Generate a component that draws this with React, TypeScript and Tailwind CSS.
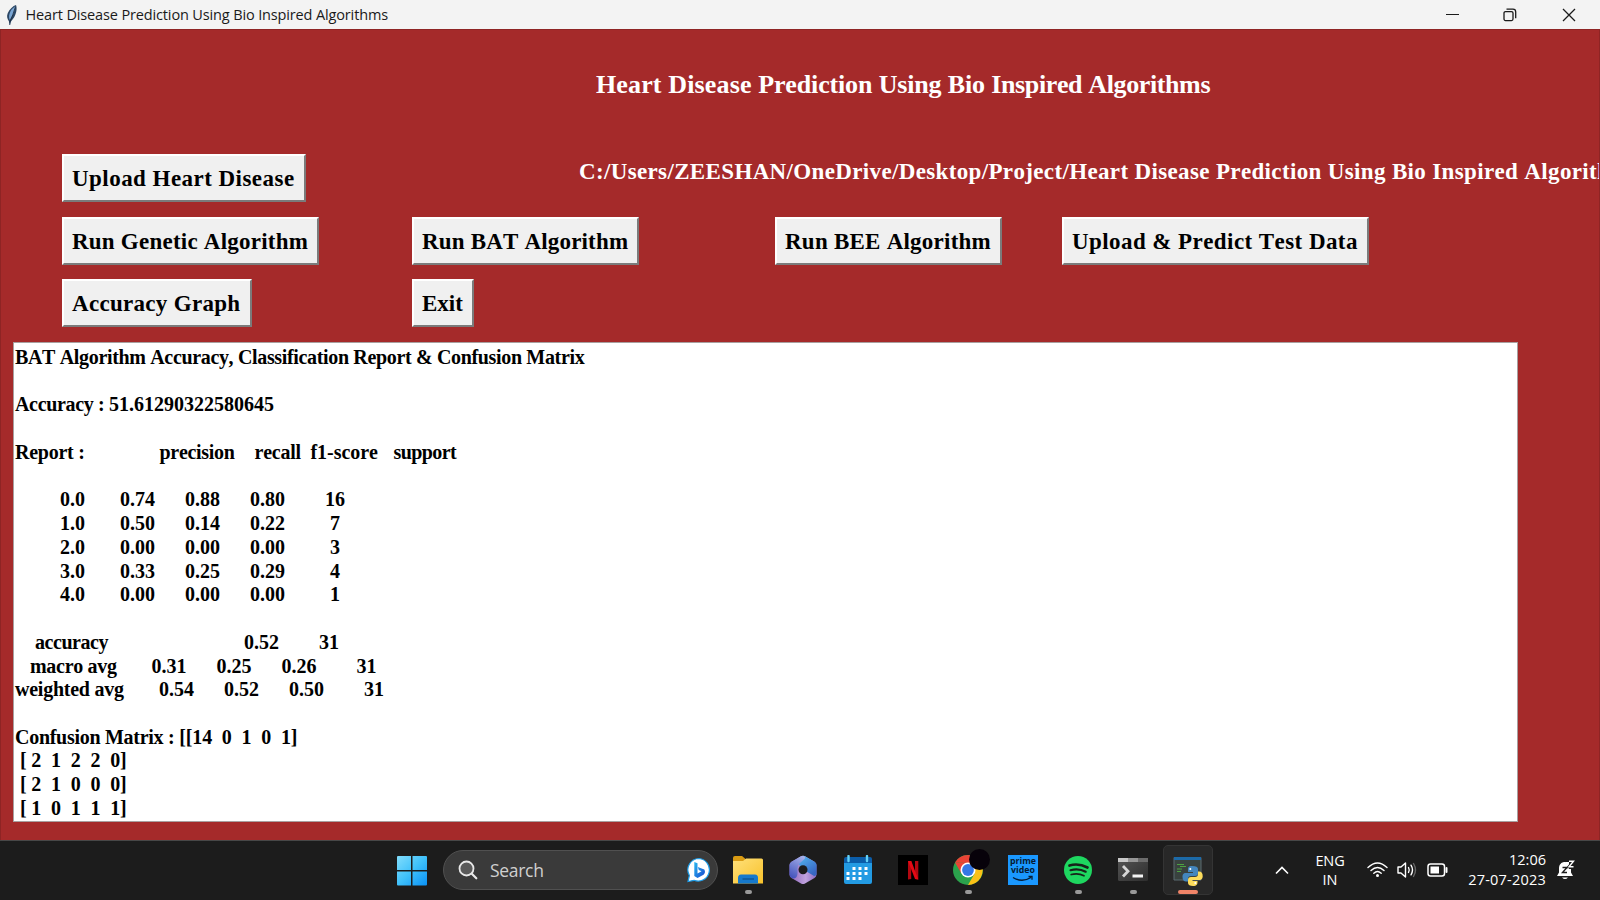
import React from "react";

const serif = "font-['Liberation_Serif','Times_New_Roman',serif] font-bold [font-kerning:none] [font-variant-ligatures:none]";

function TkButton({ label, className }: { label: string; className: string }) {
  return (
    <button
      className={`${className} h-12 shrink-0 whitespace-nowrap border-2 border-b-[#7b7b7b] border-l-white border-r-[#7b7b7b] border-t-white bg-[#f0f0f0] pl-2 text-left text-[23px] leading-none text-black`}
    >
      {label}
    </button>
  );
}

function TitleBar() {
  return (
    <header className="flex h-[29px] shrink-0 items-center bg-[#f3f3f3] pl-[5px]">
      <svg width="14" height="22" viewBox="0 0 14 22">
        <path d="M11 1C12.3 4 11.5 9.500 9 13.500L6 17.500 5.200 21 4.300 21 4 17.500C2 14.500 1.500 12 2.800 9 4.500 5 8 2 11 1Z" fill="#2b4664" />
        <path d="M10.500 2C10 7 7.500 12 4.800 16 3.300 13 4.200 8.500 7 5Z" fill="#79a5d3" />
        <path d="M10.500 2.500C9 8 7 13 4.700 18.500" stroke="#1a2a3c" strokeWidth=".8" fill="none" />
      </svg>
      <span className="ml-[6.5px] whitespace-nowrap font-['Open_Sans','Noto_Sans',sans-serif] text-[14.5px] leading-5 tracking-[-0.14px] text-[#1a1a1a]">
        Heart Disease Prediction Using Bio Inspired Algorithms
      </span>
      <div className="ml-auto flex items-center pr-6 text-[#1a1a1a]">
        <svg width="13" height="14" viewBox="0 0 13 14"><path d="M0 6.500H13" stroke="currentColor" /></svg>
        <svg className="ml-[44px]" width="14" height="14" viewBox="0 0 14 14" fill="none" stroke="currentColor" strokeWidth="1.3">
          <rect x="1" y="3.6" width="9" height="9" rx="1.5" />
          <path d="M3.5 1.2H10Q12.7 1.2 12.7 4V10.3" />
        </svg>
        <svg className="ml-[45px]" width="14" height="14" viewBox="0 0 14 14"><path d="M1 1 13 13M13 1 1 13" stroke="currentColor" strokeWidth="1.3" /></svg>
      </div>
    </header>
  );
}

const scoreRows = [
  "         0.0       0.74      0.88      0.80        16",
  "         1.0       0.50      0.14      0.22         7",
  "         2.0       0.00      0.00      0.00         3",
  "         3.0       0.33      0.25      0.29         4",
  "         4.0       0.00      0.00      0.00         1",
];

const matrixRows = [" [ 2  1  2  2  0]", " [ 2  1  0  0  0]", " [ 1  0  1  1  1]"];

function Line({ children }: { children?: React.ReactNode }) {
  return <div className="flex h-[23.74px] whitespace-pre">{children}</div>;
}

function Report() {
  return (
    <section className="ml-3 mt-[15px] h-[480px] w-[1505px] overflow-hidden border border-[#a8a0a0] bg-white pl-px pt-[2px] text-[20px] leading-[24px] text-black">
      <Line><span className="tracking-[-0.34px]">BAT Algorithm Accuracy, Classification Report &amp; Confusion Matrix</span></Line>
      <Line />
      <Line><span className="tracking-[-0.33px]">Accuracy : </span>51.61290322580645</Line>
      <Line />
      <Line>
        <span className="w-[144.5px] tracking-[-0.25px]">Report :</span>
        <span className="w-[95px] tracking-[-0.3px]">precision</span>
        <span className="w-[56px] tracking-[-0.25px]">recall</span>
        <span className="w-[83px] tracking-[-0.05px]">f1-score</span>
        <span className="tracking-[-0.6px]">support</span>
      </Line>
      <Line />
      {scoreRows.map((row) => <Line key={row}>{row}</Line>)}
      <Line />
      <Line><span className="w-[229px] pl-[20px] tracking-[-0.45px]">accuracy</span>{"0.52        31"}</Line>
      <Line><span className="w-[136.5px] pl-[15px] tracking-[-0.3px]">macro avg</span>{"0.31      0.25      0.26        31"}</Line>
      <Line><span className="w-[144px] tracking-[-0.25px]">weighted avg</span>{"0.54      0.52      0.50        31"}</Line>
      <Line />
      <Line><span className="tracking-[-0.28px]">Confusion Matrix : </span><span className="tracking-[-0.1px]">[[14  0  1  0  1]</span></Line>
      {matrixRows.map((row) => <Line key={row}><span className="tracking-[-0.1px]">{row}</span></Line>)}
    </section>
  );
}

function AppSlot({ children, dot }: { children: React.ReactNode; dot?: boolean }) {
  return (
    <div className="flex h-[50px] w-[55px] shrink-0 flex-col items-center pt-[10px]">
      <div className="flex h-[30px] items-center">{children}</div>
      {dot && <div className="mt-[5px] h-1 w-[7px] rounded-full bg-[#9a9a9a]" />}
    </div>
  );
}

function Taskbar() {
  return (
    <footer className="flex h-[60px] shrink-0 items-start border-t border-[#474747] bg-[#1c1c1c] pt-[4px] font-['Open_Sans','Noto_Sans',sans-serif] text-white">
      <svg className="ml-[397px] mt-[11px] shrink-0" width="30" height="30" viewBox="0 0 30 30">
        <defs>
          <linearGradient id="win" x1="0" y1="0" x2="1" y2="1"><stop stopColor="#82ddfb" /><stop offset=".5" stopColor="#3fc1fb" /><stop offset="1" stopColor="#0a91f5" /></linearGradient>
        </defs>
        <path d="M1 0H14V14H0V1Q0 0 1 0ZM15.5 0H29Q30 0 30 1V14H15.5ZM0 15.5H14V29.5H1Q0 29.5 0 28.5ZM15.5 15.5H30V28.5Q30 29.5 29 29.5H15.5Z" fill="url(#win)" />
      </svg>
      <div className="ml-4 mt-[5px] flex h-10 w-[275px] shrink-0 items-center rounded-full border border-[#505050] bg-[#3a3a3a] pl-[14px] pr-[5px]">
        <svg width="20" height="20" viewBox="0 0 20 20" fill="none" stroke="#e8e8e8" strokeLinecap="round">
          <circle cx="8.5" cy="8.5" r="7" strokeWidth="1.8" fill="#5a5a5a" /><path d="M13.8 13.8 18.3 18.3" strokeWidth="2.2" />
        </svg>
        <span className="ml-[12px] text-[17.5px] leading-6 tracking-[-0.3px] text-[#d0d0d0]">Search</span>
        <svg className="ml-auto" width="26" height="26" viewBox="0 0 26 26">
          <defs><linearGradient id="bing" x1="0" y1="0" x2="1" y2="1"><stop stopColor="#28b8ee" /><stop offset="1" stopColor="#1748d0" /></linearGradient></defs>
          <path d="M13 1.5A11.3 11.3 0 1 1 8 23.3L2 24.5 3.4 18.5A11.3 11.3 0 0 1 13 1.5Z" fill="#fff" stroke="#1b9ce8" strokeWidth="1.2" />
          <path d="M8.3 5 11.5 6.2V16.5L15.5 14.2 12.8 13 11.8 10 18.3 12.5Q20 15.5 17.5 17.8L11.5 21 8.3 19Z" fill="url(#bing)" />
        </svg>
      </div>

      <div className="ml-[2.5px] flex shrink-0">
        <AppSlot dot>
          <svg width="32" height="30" viewBox="0 0 32 30">
            <defs><linearGradient id="fold" x1="0" y1="0" x2="1" y2="1"><stop stopColor="#ffe07a" /><stop offset="1" stopColor="#f8c22b" /></linearGradient></defs>
            <path d="M1 3Q1 1 3 1H10L13 3.500V8H1Z" fill="#d99b13" />
            <path d="M1 6H11L14 3.5H29.5Q31 3.5 31 5V28.500H1Z" fill="url(#fold)" />
            <path d="M6 28.500V23Q6 19.500 9 19.500H23Q26 19.500 26 23V28.500Z" fill="#1679cc" /><path d="M10.500 24H22" stroke="#0c4e8a" strokeWidth="1.2" />
          </svg>
        </AppSlot>
        <AppSlot>
          <svg width="30" height="30" viewBox="0 0 30 30">
            <defs>
              <linearGradient id="o1" x1=".3" y1="1" x2=".7" y2="0"><stop stopColor="#4655bd" /><stop offset="1" stopColor="#a3aee8" /></linearGradient>
              <linearGradient id="o2" x1="0" y1="0" x2=".6" y2="1"><stop stopColor="#55b9f0" /><stop offset="1" stopColor="#3766c4" /></linearGradient>
              <linearGradient id="o3" x1="0" y1="0" x2="1" y2="0"><stop stopColor="#8c63bb" /><stop offset=".6" stopColor="#c0a2dd" /><stop offset="1" stopColor="#8b6cc4" /></linearGradient>
            </defs>
            <path d="M13 1.300Q15 .3 17 1.300L26.500 6.800Q28.500 8 28.500 10V19.500Q28.500 21.700 26.500 23L17 28.500Q15 29.500 13 28.500L3.500 23Q1.500 21.700 1.500 19.500V10Q1.500 8 3.500 6.800Z" fill="url(#o3)" />
            <path d="M15 .8 17 1.300 26.500 6.800Q28.500 8 28.500 10V19.500Q27 22 24.500 20L15 14.500 10.500 9Z" fill="url(#o2)" />
            <path d="M15 .8Q19 2 16 4.500L12 8Q9.500 10 9.500 13V19Q9 23.500 5 23.500L3.500 23Q1.500 21.700 1.500 19.500V10Q1.500 8 3.500 6.800L13 1.300Z" fill="url(#o1)" />
            <circle cx="15" cy="14.700" r="4.500" fill="#1c1c1c" />
          </svg>
        </AppSlot>
        <AppSlot>
          <svg width="28" height="30" viewBox="0 0 28 30">
            <path d="M0 4Q0 2 2 2H26Q28 2 28 4V9H0Z" fill="#0b5da9" /><path d="M0 8H28V27Q28 29 26 29H2Q0 29 0 27Z" fill="#239be3" />
            <path d="M4.5 1V6M23 1V6" stroke="#63d2f7" strokeWidth="2.4" strokeLinecap="round" />
            <path d="M8.500 13.500H24M2.500 18.500H24M2.500 23.500H18.500" stroke="#fff" strokeWidth="3" strokeDasharray="3 3" />
          </svg>
        </AppSlot>
        <AppSlot>
          <svg width="30" height="30" viewBox="0 0 30 30">
            <path d="M0 0H30V30H0Z" fill="#000" /><path d="M10 6V24.5L13.2 24V6ZM17 6V24L20.3 24.5V6Z" fill="#b30710" /><path d="M10 6H13.3L20.3 24.5 17 24Z" fill="#e50914" />
          </svg>
        </AppSlot>
        <AppSlot dot>
          <svg className="overflow-visible" width="30" height="30" viewBox="0 0 30 30">
            <circle cx="15" cy="15" r="15" fill="#2ba24c" />
            <path d="M2 7.5A15 15 0 0 1 28 7.5L15 8Z" fill="#ea4335" /><path d="M2 7.5 8.5 18.8 15 8Z" fill="#ea4335" />
            <path d="M15 8H28A15 15 0 0 1 15 30L21.5 18.8Z" fill="#fbc116" />
            <circle cx="15" cy="15" r="7.5" fill="#fff" /><circle cx="15" cy="15" r="5.9" fill="#3578e5" /><circle cx="26.5" cy="4.5" r="10.5" fill="#07020a" />
          </svg>
        </AppSlot>
        <AppSlot>
          <div className="flex h-[30px] w-[30px] flex-col items-center bg-[#1a98ff] pt-[2px] text-[8.8px] font-bold text-[#061b33]">
            <span className="leading-[9px]">prime</span>
            <span className="leading-[9px]">video</span>
            <svg width="22" height="7" viewBox="0 0 22 7" fill="none" stroke="currentColor" strokeWidth="1.3"><path d="M1 2.5Q10 8 19 2.5M16.5 1.5H20V4.8" /></svg>
          </div>
        </AppSlot>
        <AppSlot dot>
          <svg width="28" height="28" viewBox="0 0 28 28" fill="none" stroke="#17231a" strokeLinecap="round">
            <circle cx="14" cy="14" r="14" fill="#1ed760" stroke="none" />
            <path d="M5.5 9.5Q14.5 6.8 23.5 11.5" strokeWidth="2.7" /><path d="M6.5 14.2Q14.5 11.8 21.7 15.7" strokeWidth="2.2" /><path d="M7.2 18.5Q14.2 16.7 20 19.7" strokeWidth="1.8" />
          </svg>
        </AppSlot>
        <AppSlot dot>
          <svg width="30" height="24" viewBox="0 0 30 24">
            <defs><linearGradient id="term" x1="0" y1="0" x2="1" y2="1"><stop stopColor="#555" /><stop offset="1" stopColor="#2e2e2e" /></linearGradient></defs>
            <rect width="30" height="23" rx="1.5" fill="url(#term)" /><path d="M0 0H10V4H0Z" fill="#c8c8c8" /><path d="M10 0H20V4H10Z" fill="#969696" /><path d="M20 0H30V4H20Z" fill="#6b6b6b" />
            <path d="M5 8 10 13.2 5 18.5" fill="none" stroke="#d6d6d6" strokeWidth="2.8" /><path d="M14.5 18H25" stroke="#f4f4f4" strokeWidth="3" />
          </svg>
        </AppSlot>
        <div className="ml-[2.5px] flex h-[50px] w-[50px] shrink-0 flex-col items-center rounded-[5px] border border-[#343434] bg-[#282828] pt-[10px]">
          <svg width="30" height="30" viewBox="0 0 30 30">
            <path d="M1 1.500H28V24H1Z" fill="#39423f" stroke="#5b6a70" /><path d="M1 1H28V4H1Z" fill="#1c6aa8" />
            <path d="M4 8.500H11M4 13H9M7 10.500H13M4 15.500H8" stroke="#4da341" strokeWidth="1.2" />
            <path d="M19 10C15 10 15 12 15 14V16H20V17H13C10 17 9.5 19 9.5 21 9.5 24 11 25.5 13 25.5H15V23C15 21 16 20 18 20H22C24 20 25 19 25 17V13C25 11 23 10 19 10Z" fill="#4386bd" />
            <path d="M20 30C24 30 24.500 28 24.500 26V25H19.500V24H26C29 24 29.700 22 29.700 20 29.700 17 28.500 15.500 26 15.500H25V18C25 20 24 21 22 21H18C16 21 15 22 15 24V27C15 29 17 30 20 30Z" fill="#fcdc5c" />
            <circle cx="17.300" cy="13" r="1" fill="#fff" /><circle cx="22.300" cy="27" r="1" fill="#fff" />
          </svg>
          <div className="mt-[4px] h-1 w-5 rounded-full bg-[#f08468]" />
        </div>
      </div>

      <svg className="ml-[62px] mt-[21px] shrink-0" width="14" height="9" viewBox="0 0 14 9" fill="none" stroke="#fff" strokeWidth="1.600"><path d="M1 7.500 7 1.500 13 7.500" /></svg>
      <div className="ml-[19px] mt-[6px] flex w-[44px] shrink-0 flex-col items-center text-[14.500px] leading-[19px] tracking-[-0.1px]">
        <span>ENG</span><span>IN</span>
      </div>
      <div className="ml-[15px] mt-[16px] flex h-[18px] shrink-0 items-center">
        <svg width="21" height="16" viewBox="0 0 21 16" fill="none" stroke="#fff" strokeWidth="1.400" strokeLinecap="round">
          <path d="M1 5.500Q10.500 -3.500 20 5.500M4 8.500Q10.500 2.500 17 8.500M6.800 11.300Q10.500 7.800 14.200 11.300" /><circle cx="10.500" cy="13.500" r="1.500" fill="#fff" stroke="none" />
        </svg>
        <svg className="ml-[9px]" width="20" height="18" viewBox="0 0 20 18" fill="none" stroke="#fff" strokeWidth="1.400" strokeLinecap="round" strokeLinejoin="round">
          <path d="M1 6H4L8.500 2V16L4 12H1ZM11.500 6.500Q13 9 11.500 11.500M14 4.200Q17 9 14 13.800" /><path d="M16.500 2.500Q20.500 9 16.500 15.500" stroke="#666" />
        </svg>
        <svg className="ml-[10px]" width="21" height="14" viewBox="0 0 21 14" fill="none" stroke="#fff" strokeWidth="1.500">
          <rect x="1" y="1" width="16.500" height="12" rx="2.500" /><rect x="3.500" y="3.500" width="8.500" height="7" fill="#fff" stroke="none" /><path d="M19.500 5V9" strokeWidth="2" strokeLinecap="round" />
        </svg>
      </div>
      <div className="ml-[17px] mt-[5px] flex w-[81px] shrink-0 flex-col items-end whitespace-nowrap text-[14.500px] leading-[20px]">
        <span>12:06</span><span className="tracking-[0.22px]">27-07-2023</span>
      </div>
      <svg className="ml-[10px] mt-[15px] shrink-0" width="20" height="21" viewBox="0 0 20 21">
        <path d="M4 6Q6 2 10 2H13V11L15 12V14H4Z" fill="#fff" /><path d="M9 2C5 2 3 5 3 8V12.500L1 16H17L15 12.500V9H9ZM6 17.500H12Q9 20.500 6 17.500Z" fill="#fff" />
        <path d="M6.500 7.500H11L6.500 12.500H11" fill="none" stroke="#1c1c1c" strokeWidth="1.400" /><path d="M13 1.200H17.500L13 6.800H17.500" fill="none" stroke="#1c1c1c" strokeWidth="3" /><path d="M13 1.200H17.500L13 6.800H17.500" fill="none" stroke="#fff" strokeWidth="1.400" />
      </svg>
    </footer>
  );
}

export default function App() {
  return (
    <div className="flex h-[900px] w-[1600px] flex-col overflow-hidden bg-[#a52a2a]">
      <TitleBar />
      <main className={`${serif} h-[811px] shrink-0 overflow-hidden border-l border-r border-t border-l-[#8e2424] border-r-[#8e2424] border-t-[#8e2424]`}>
        <h1 className="ml-[595px] mt-[40px] h-[30px] whitespace-nowrap text-[26px] leading-[30px] text-white">
          <span className="tracking-[0.14px]">Heart Disease </span>
          <span className="tracking-[-0.15px]">Prediction Using Bio </span>
          <span className="tracking-[-0.38px]">Inspired Algorithms</span>
        </h1>
        <div className="mt-[54px] flex pl-[61px]">
          <TkButton label="Upload Heart Disease" className="w-[244px] tracking-[0.46px]" />
          <div className="ml-[273px] mt-[5px] whitespace-nowrap text-[23px] leading-[26px] tracking-[0.355px] text-white">
            C:/Users/ZEESHAN/OneDrive/Desktop/Project/Heart Disease Prediction Using Bio Inspired Algorithms/Dataset
          </div>
        </div>
        <div className="mt-[15px] flex pl-[61px]">
          <TkButton label="Run Genetic Algorithm" className="w-[257px] tracking-[0.23px]" />
          <TkButton label="Run BAT Algorithm" className="ml-[93px] w-[227px] tracking-[0.18px]" />
          <TkButton label="Run BEE Algorithm" className="ml-[136px] w-[227px] tracking-[0.24px]" />
          <TkButton label="Upload &amp; Predict Test Data" className="ml-[60px] w-[307px] tracking-[0.43px]" />
        </div>
        <div className="mt-[14px] flex pl-[61px]">
          <TkButton label="Accuracy Graph" className="w-[190px] tracking-[0.3px]" />
          <TkButton label="Exit" className="ml-[160px] w-[62px]" />
        </div>
        <Report />
      </main>
      <Taskbar />
    </div>
  );
}
